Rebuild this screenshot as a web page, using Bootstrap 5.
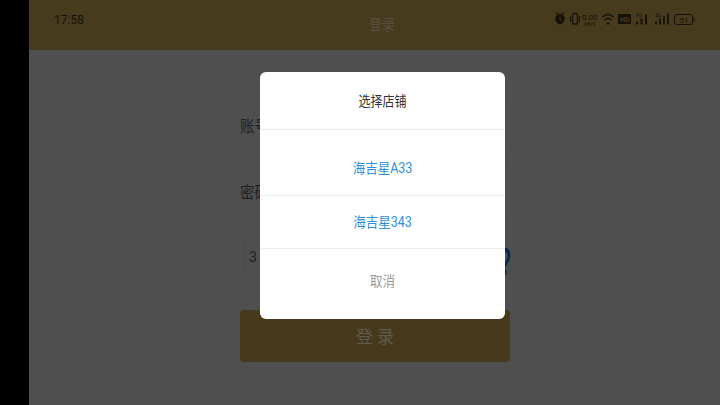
<!DOCTYPE html>
<html lang="zh">
<head>
<meta charset="utf-8">
<link href="https://cdn.jsdelivr.net/npm/bootstrap@5.3.0/dist/css/bootstrap.min.css" rel="stylesheet">
<style>
html,body{width:720px;height:405px;overflow:hidden;background:#000;font-family:"Roboto","Noto Sans CJK SC",sans-serif}
.shell{width:720px;height:405px;background:#000;padding-left:29px}
.screen{height:405px;background:#4f4f4f;position:relative}
.topbar{height:50px;background:#473b1e;color:#565142;position:relative;font-size:13px;padding-left:15px}
.clock{position:absolute;left:25px;top:13px;font:12px "Roboto",sans-serif;color:#141209}
.statusicons{position:absolute;left:526px;top:11px;color:#141209}
.form-area{width:270px;margin-left:211px;padding-top:56px}
.field-row{height:66px;font-size:14.5px;color:#1f1f1f}
.field-row.second{height:65px}
.field-label{width:40px;height:40px;line-height:40px;padding-top:1px}
.field-box{flex:1;height:40px;border:1px solid #535353;margin-right:1px}
.captcha-row{height:73px}
.captcha-input{width:70px;height:40px;border:1px solid #535353;font:14px "Roboto",sans-serif;color:#1f1f1f;padding:11px 8px 9px}
.captcha-code{color:#0a2350;font:700 38px "Liberation Sans",sans-serif;line-height:50px;margin-right:-1px;transform:scaleX(.5);transform-origin:right center}
.login-btn{height:52px;background:#47391b;border-radius:4px;color:#5f5b50;font-size:17px;border:0;width:100%;padding:3px 0 0}
.login-btn:disabled{background:#47391b;color:#5f5b50;opacity:1}
.dialog-veil{position:absolute;left:231px;top:72px;width:245px;height:247px;background:#fff;border-radius:6px;overflow:hidden}
.dialog-head{height:57px;font-size:12px;color:#333;padding-top:2px}
.dialog-item{font-size:12.5px;color:#2f8fd8;border-top:1px solid #eeeeee}
.dialog-item.one{height:66px;padding-top:13px}
.dialog-item.two{height:53px;padding-top:2px}
.dialog-item.cancel{height:71px;color:#999;padding-bottom:4px}
.tall-text{display:inline-block;transform:scaleY(1.12)}
</style>
</head>
<body>
<div class="shell">
  <div class="screen">
    <div class="topbar d-flex align-items-center justify-content-center">
      <span class="tall-text">登录</span>
      <span class="clock">17:58</span>
      <svg class="statusicons" width="154" height="16" viewBox="0 0 154 16" fill="none" stroke="#141209">
        <ellipse cx="5" cy="8" rx="4.200" ry="4.800" fill="#141209"/>
        <path d="M1 3l2-1.500M9 3l-2-1.500" stroke-width="1.300"/>
        <path d="M5 5.500v3l1.500 1" stroke="#473b1e"/>
        <rect x="17.500" y="2.500" width="5" height="10.500" rx="1" stroke-width="1.300"/>
        <path d="M15.500 5v6M24.500 5v6"/>
        <text x="27" y="8.500" font-family="Roboto" font-size="8" fill="#141209" stroke="none">0.00</text>
        <text x="29" y="14.500" font-family="Roboto" font-size="5" fill="#141209" stroke="none">KB/S</text>
        <path d="M47.500 6q5.500-5 11 0M49.500 9q3.500-3 7 0" stroke-width="1.600"/>
        <circle cx="53" cy="12.500" r="1.300" fill="#141209" stroke="none"/>
        <rect x="63" y="3" width="13" height="10" rx="1" fill="#141209" stroke="none"/>
        <text x="65" y="10.500" font-family="Roboto" font-size="7" font-weight="700" fill="#473b1e" stroke="none">HD</text>
        <text x="81" y="6" font-family="Roboto" font-size="5" fill="#141209" stroke="none">4G</text>
        <path d="M82 13.500v-3M86.500 13.500v-6M91 13.500v-10" stroke-width="2"/>
        <text x="100" y="6" font-family="Roboto" font-size="5" fill="#141209" stroke="none">5G</text>
        <path d="M101 13.500v-3M105 13.500v-6M109 13.500v-8M113 13.500v-11" stroke-width="1.800"/>
        <rect x="119.500" y="3.500" width="18" height="10" rx="2.500"/>
        <path d="M139 6.500v4" stroke-width="1"/>
        <text x="124.500" y="11.500" font-family="Roboto" font-size="8" fill="#141209" stroke="none">51</text>
      </svg>
    </div>
    <div class="form-area">
      <div class="field-row d-flex"><span class="field-label tall-text">账号</span><div class="field-box"></div></div>
      <div class="field-row second d-flex"><span class="field-label tall-text">密码</span><div class="field-box"></div></div>
      <div class="captcha-row d-flex justify-content-between">
        <div class="captcha-input">3</div>
        <div class="captcha-code">?</div>
      </div>
      <button type="button" class="login-btn btn" disabled>登 录</button>
    </div>
    <div class="dialog-veil d-flex flex-column text-center">
      <div class="dialog-head d-flex align-items-center justify-content-center"><span class="tall-text">选择店铺</span></div>
      <div class="dialog-item one d-flex align-items-center justify-content-center"><span class="tall-text">海吉星A33</span></div>
      <div class="dialog-item two d-flex align-items-center justify-content-center"><span class="tall-text">海吉星343</span></div>
      <div class="dialog-item cancel d-flex align-items-center justify-content-center"><span class="tall-text">取消</span></div>
    </div>
  </div>
</div>
<script src="https://cdn.jsdelivr.net/npm/bootstrap@5.3.0/dist/js/bootstrap.bundle.min.js"></script>
</body>
</html>
